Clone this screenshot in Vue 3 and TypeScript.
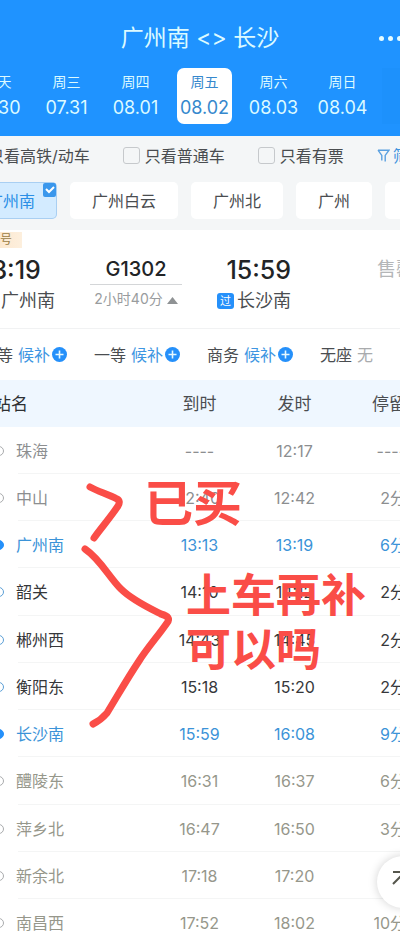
<script setup lang="ts">
import { reactive, ref } from 'vue'

interface Day { week: string; date: string }
interface Seat { name: string; waitlist: boolean }
interface Stop { name: string; arrive: string; depart: string; stay: string; state: 'before' | 'end' | 'on' | 'after' }

const days: Day[] = [
  { week: '今天', date: '07.30' },
  { week: '周三', date: '07.31' },
  { week: '周四', date: '08.01' },
  { week: '周五', date: '08.02' },
  { week: '周六', date: '08.03' },
  { week: '周日', date: '08.04' },
]
const activeDate = ref<string>('08.02')

const filters = reactive([
  { id: 'fast', label: '只看高铁/动车', checked: false },
  { id: 'normal', label: '只看普通车', checked: false },
  { id: 'left', label: '只看有票', checked: false },
])

const stations: string[] = ['广州南', '广州白云', '广州北', '广州']
const activeStation = ref<string>('广州南')

const seats: Seat[] = [
  { name: '二等', waitlist: true },
  { name: '一等', waitlist: true },
  { name: '商务', waitlist: true },
  { name: '无座', waitlist: false },
]

const expanded = ref<boolean>(true)

const stops: Stop[] = [
  { name: '珠海', arrive: '----', depart: '12:17', stay: '----', state: 'before' },
  { name: '中山', arrive: '12:40', depart: '12:42', stay: '2分', state: 'before' },
  { name: '广州南', arrive: '13:13', depart: '13:19', stay: '6分', state: 'end' },
  { name: '韶关', arrive: '14:10', depart: '14:12', stay: '2分', state: 'on' },
  { name: '郴州西', arrive: '14:43', depart: '14:45', stay: '2分', state: 'on' },
  { name: '衡阳东', arrive: '15:18', depart: '15:20', stay: '2分', state: 'on' },
  { name: '长沙南', arrive: '15:59', depart: '16:08', stay: '9分', state: 'end' },
  { name: '醴陵东', arrive: '16:31', depart: '16:37', stay: '6分', state: 'after' },
  { name: '萍乡北', arrive: '16:47', depart: '16:50', stay: '3分', state: 'after' },
  { name: '新余北', arrive: '17:18', depart: '17:20', stay: '2分', state: 'after' },
  { name: '南昌西', arrive: '17:52', depart: '18:02', stay: '10分', state: 'after' },
]

function toTop(): void {
  window.scrollTo({ top: 0, behavior: 'smooth' })
}
</script>

<template>
  <main class="page">
    <header class="top">
      <div class="bar">
        <h1>广州南 &lt;&gt; 长沙</h1>
        <button class="more" type="button" aria-label="更多"><i></i><i></i><i></i></button>
      </div>
      <nav class="days">
        <button
          v-for="d in days"
          :key="d.date"
          type="button"
          class="day"
          :class="{ active: d.date === activeDate }"
          @click="activeDate = d.date"
        >
          <span class="week">{{ d.week }}</span>
          <span class="date">{{ d.date }}</span>
        </button>
        <span class="calendar"></span>
      </nav>
    </header>

    <section class="filters">
      <label v-for="f in filters" :key="f.id" :for="f.id">
        <input :id="f.id" v-model="f.checked" type="checkbox" />{{ f.label }}
      </label>
      <button type="button" class="sift">
        <svg width="13" height="14" viewBox="0 0 13 14" aria-hidden="true">
          <path d="M1 1.2h11L8.2 6.4v6.2M1 1.2l3.8 5.2v5.2" />
        </svg>筛选
      </button>
    </section>

    <section class="chips">
      <button
        v-for="s in stations"
        :key="s"
        type="button"
        class="chip"
        :class="{ active: s === activeStation }"
        @click="activeStation = s"
      >
        {{ s }}
        <svg v-if="s === activeStation" class="tick" width="13" height="14" viewBox="0 0 13 14" aria-hidden="true">
          <rect width="13" height="14" rx="2" />
          <path d="M3 6l3 3 5-5" />
        </svg>
      </button>
      <button type="button" class="chip blank" aria-label="其他车站"></button>
    </section>

    <article class="train">
      <span class="badge">复兴号</span>
      <div class="trip">
        <div class="point leave">
          <strong>13:19</strong>
          <span class="stop"><em>过</em>广州南</span>
        </div>
        <div class="run">
          <b>G1302</b>
          <button type="button" :aria-expanded="expanded" @click="expanded = !expanded">
            2小时40分
            <svg width="11" height="7" viewBox="0 0 11 7" aria-hidden="true"><path d="M5.5 0 11 7H0z" /></svg>
          </button>
        </div>
        <div class="point arrive">
          <strong>15:59</strong>
          <span class="stop"><em>过</em>长沙南</span>
        </div>
        <span class="sold">售罄</span>
      </div>

      <div class="seats">
        <div v-for="s in seats" :key="s.name" class="seat">
          <span>{{ s.name }}</span>
          <button v-if="s.waitlist" type="button">
            候补
            <svg width="15" height="15" viewBox="0 0 15 15" aria-hidden="true">
              <circle cx="7.5" cy="7.5" r="7.5" />
              <path d="M7.5 3.5v8M3.5 7.5h8" />
            </svg>
          </button>
          <span v-else class="none">无</span>
        </div>
      </div>

      <table v-show="expanded" class="stops">
        <colgroup><col /><col class="time" /><col class="time" /><col class="stay" /></colgroup>
        <thead>
          <tr><th>站名</th><th>到时</th><th>发时</th><th>停留</th></tr>
        </thead>
        <tbody>
          <tr v-for="s in stops" :key="s.name" :class="s.state">
            <td><span class="name"><i></i>{{ s.name }}</span></td>
            <td>{{ s.arrive }}</td>
            <td>{{ s.depart }}</td>
            <td>{{ s.stay }}</td>
          </tr>
        </tbody>
      </table>
    </article>

    <svg class="ink" width="200" height="260" viewBox="0 0 200 260" aria-hidden="true">
      <path d="M90 17C99 22 108 24 117 29Q121 31 118 36C110 48 101 58 94 68" />
      <path d="M85 79C100 89 109 107 121 119C132 130 149 138 161 144Q172 147 167 153C158 166 148 177 139 191C127 209 118 225 107 243Q101 250 93 254" />
    </svg>
    <p class="note bought">已买</p>
    <p class="note ask">上车再补<br />可以吗</p>

    <button type="button" class="to-top" aria-label="回到顶部" @click="toTop">
      <svg width="24" height="26" viewBox="0 0 24 26" aria-hidden="true">
        <path d="M2 3h20M12 4v20M2 15 12 5l10 10" />
      </svg>
    </button>
  </main>
</template>

<style>
body {
  margin: 0;
  background: #fff;
}
</style>

<style scoped>
.page {
  position: relative;
  overflow: hidden;
  font-family: Inter, "Noto Sans CJK SC", sans-serif;
  font-size: 16px;
  line-height: 24px;
  color: #4a4d50;
  background: #fff;
}
button {
  font: inherit;
  color: inherit;
  background: none;
  border: 0;
  padding: 0;
  margin: 0;
  white-space: nowrap;
  cursor: pointer;
}
.top {
  background: #1f93ff;
  color: #dcfaff;
  padding-bottom: 12px;
}
.bar {
  display: flex;
  justify-content: center;
  padding-top: 22px;
  height: 46px;
  position: relative;
}
h1 {
  margin: 0;
  font-size: 23px;
  font-weight: 400;
  line-height: 32px;
}
.more {
  position: absolute;
  right: -2px;
  top: 34px;
  display: flex;
  gap: 4px;
  padding: 2px 0;
}
.more i {
  width: 5px;
  height: 5px;
  border-radius: 50%;
  background: #e4fbff;
}
.days {
  display: flex;
  gap: 14px;
  margin-left: -30px;
}
.day {
  display: flex;
  flex-direction: column;
  align-items: center;
  flex: 0 0 55px;
  height: 56px;
  padding-top: 3px;
  border-radius: 7px;
}
.day.active {
  background: #fff;
  color: #3688cd;
}
.week {
  font-size: 14px;
  line-height: 22px;
}
.date {
  font-size: 18px;
  line-height: 30px;
}
.calendar {
  flex: 0 0 55px;
  margin-left: -2px;
  background: #1d91fc;
}
.filters {
  display: flex;
  gap: 33px;
  align-items: center;
  height: 39px;
  margin-left: -34px;
  background: #f4f6f7;
  white-space: nowrap;
}
.filters label {
  display: flex;
  flex: none;
  align-items: center;
  gap: 5px;
}
.filters input {
  appearance: none;
  flex: none;
  width: 17px;
  height: 17px;
  margin: 0;
  border: 1px solid #c6c9cc;
  border-radius: 3px;
}
.filters input:checked {
  background: #1f93ff;
}
.sift {
  display: flex;
  align-items: center;
  gap: 3px;
  color: #3f93dd;
}
.sift svg {
  fill: none;
  stroke: #5aa0e0;
  stroke-width: 1.4;
}
.chips {
  display: flex;
  gap: 13px;
  padding: 7px 0 11px;
  background: #f4f6f7;
}
.chip {
  position: relative;
  flex: none;
  height: 37px;
  padding: 0 22px;
  border-radius: 5px;
  background: #fff;
}
.chip:first-child {
  margin-left: -35px;
}
.chip.active {
  background: #d3ebff;
  color: #2b8fe6;
  box-shadow: inset 0 0 0 1px #a9cff2;
}
.chip.blank {
  width: 76px;
}
.tick {
  position: absolute;
  top: 1px;
  right: 1px;
  fill: #3a97ec;
}
.tick path {
  fill: none;
  stroke: #fff;
  stroke-width: 2;
}
.badge {
  display: block;
  width: 46px;
  margin: 2px 0 0 -24px;
  font-size: 12px;
  line-height: 16px;
  color: #9a7d45;
  background: linear-gradient(90deg, #fbe2c4, #fdefdd);
}
.train {
  display: flow-root;
}
.trip {
  display: flex;
  height: 81px;
  padding-top: 6px;
  box-sizing: border-box;
  border-bottom: 1px solid #f1f2f3;
  margin-left: -24px;
  white-space: nowrap;
}
.point {
  display: flex;
  flex: none;
  flex-direction: column;
  width: 79px;
}
.point strong {
  font-size: 25px;
  font-weight: 500;
  line-height: 32px;
  color: #222426;
}
.leave strong {
  padding-left: 5px;
}
.stop {
  display: flex;
  align-items: center;
  align-self: flex-end;
  gap: 3px;
  font-size: 18px;
  line-height: 30px;
}
.stop em {
  width: 17px;
  height: 16px;
  border-radius: 3px;
  background: #2590fa;
  color: #fff;
  font-size: 11px;
  font-style: normal;
  line-height: 16px;
  text-align: center;
}
.run {
  flex: none;
  width: 92px;
  margin-left: 35px;
  text-align: center;
}
.run b {
  display: block;
  font-size: 20px;
  font-weight: 500;
  line-height: 30px;
  color: #222426;
  border-bottom: 1px solid #d4d6d8;
}
.run button {
  font-size: 14px;
  line-height: 28px;
  color: #999c9e;
}
.run svg {
  fill: #8f9294;
}
.arrive {
  align-items: flex-end;
  margin-left: 30px;
}
.sold {
  flex: none;
  margin-left: 86px;
  font-size: 19px;
  line-height: 32px;
  color: #b4b6b8;
}
.seats {
  display: flex;
  gap: 27px;
  height: 51px;
  margin-left: -19px;
  align-items: center;
  white-space: nowrap;
}
.seat {
  display: flex;
  align-items: center;
  gap: 5px;
}
.seat button {
  display: flex;
  align-items: center;
  gap: 2px;
  color: #3e96e2;
}
.seat svg {
  fill: #2590fa;
}
.seat path {
  stroke: #e6f8ff;
  stroke-width: 1.6;
}
.none {
  color: #a9abad;
}
.stops {
  width: calc(100% + 6px);
  table-layout: fixed;
  border-collapse: collapse;
}
.time {
  width: 95px;
}
.stay {
  width: 64px;
}
th,
td {
  padding: 0;
  font-weight: 400;
  text-align: center;
  white-space: nowrap;
}
th {
  height: 47px;
  font-size: 17px;
  background: #eff7ff;
}
th:first-child {
  text-align: left;
  text-indent: -6px;
  color: #2d3033;
}
th:last-child,
td:last-child {
  text-align: right;
}
td {
  height: 47px;
  background: linear-gradient(#f4f5f5, #f4f5f5) 0 100% / 100% 1px no-repeat;
}
tr:nth-child(4n) td {
  height: 48px;
}
td:first-child {
  background-position: 18px 100%;
}
.name {
  display: flex;
  align-items: center;
  gap: 12px;
  margin-left: -6px;
}
.name i {
  box-sizing: border-box;
  width: 10px;
  height: 10px;
  border: 1px solid #a9abad;
  border-radius: 50%;
}
.before {
  color: #8c8e90;
}
.end {
  color: #3b93d8;
}
.end i {
  border-color: #2590fa;
  background: #2590fa;
}
.on {
  color: #36373a;
}
.on i {
  border-color: #5b9fd6;
}
.after {
  color: #96978b;
}
.ink {
  position: absolute;
  left: 0;
  top: 470px;
  fill: none;
  stroke: #fa4d47;
  stroke-width: 7;
  stroke-linecap: round;
  stroke-linejoin: round;
  pointer-events: none;
}
.note {
  position: absolute;
  margin: 0;
  font-weight: 700;
  color: #fa4d47;
  white-space: nowrap;
  pointer-events: none;
}
.bought {
  left: 144px;
  top: 477px;
  font-size: 49px;
  line-height: 54px;
}
.ask {
  left: 186px;
  top: 569px;
  font-size: 45px;
  line-height: 54px;
}
.to-top {
  position: absolute;
  top: 856px;
  right: -29px;
  display: flex;
  align-items: center;
  justify-content: center;
  width: 52px;
  height: 52px;
  border-radius: 50%;
  background: #fff;
  box-shadow: 0 0 10px rgba(0, 0, 0, 0.18);
}
.to-top svg {
  fill: none;
  stroke: #55564c;
  stroke-width: 2;
}
</style>
